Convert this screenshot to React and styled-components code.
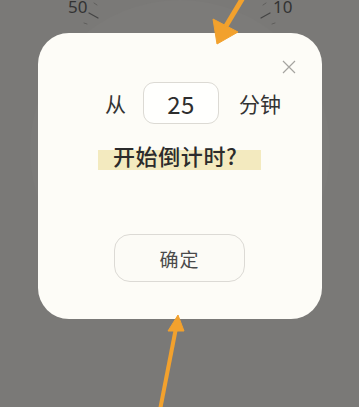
import React from 'react';
import styled, { createGlobalStyle } from 'styled-components';

const GlobalStyle = createGlobalStyle`
  html, body {
    margin: 0;
    padding: 0;
    background: #7a7977;
  }
  body {
    font-family: "Noto Sans CJK SC", "Noto Sans", sans-serif;
  }
`;

const Page = styled.div`
  position: relative;
  width: 359px;
  height: 407px;
  overflow: hidden;
  box-sizing: border-box;
  padding: 33px 0 0 38px;
  background: #7a7977;
`;

// dial behind the dialog
const Dial = styled.svg`
  position: absolute;
  top: 0;
  left: 0;
  width: 359px;
  height: 407px;
`;

const Arrows = styled.svg`
  position: absolute;
  top: 0;
  left: 0;
  width: 359px;
  height: 407px;
  pointer-events: none;
  z-index: 3;
`;

const Card = styled.div`
  position: relative;
  z-index: 1;
  width: 284px;
  height: 286px;
  box-sizing: border-box;
  background: #fdfcf7;
  border-radius: 31px;
  padding-top: 49px;
  display: flex;
  flex-direction: column;
  align-items: flex-start;
`;

const Close = styled.button`
  position: absolute;
  top: 27px;
  right: 26px;
  width: 14px;
  height: 14px;
  padding: 0;
  border: none;
  background: none;
  display: flex;
`;

const Row = styled.div`
  display: flex;
  align-items: center;
  margin-left: 67px;
  height: 42px;
  color: #333;
  font-size: 21px;
`;

const Word = styled.span`
  line-height: 1;
`;

const Minutes = styled.div`
  width: 76px;
  height: 42px;
  box-sizing: border-box;
  margin: 0 20px 0 17px;
  border: 1px solid #dcdad4;
  border-radius: 11px;
  background: #fffffd;
  display: flex;
  align-items: center;
  justify-content: center;
  font-size: 24px;
  color: #2e2e2e;
  letter-spacing: 0.5px;
`;

const Title = styled.span`
  margin: 19px 0 0 60px;
  width: 163px;
  height: 27px;
  box-sizing: border-box;
  padding-left: 15px;
  font-size: 22px;
  font-weight: 500;
  line-height: 24px;
  color: #2b2b2b;
  letter-spacing: 0.6px;
  white-space: nowrap;
  background: linear-gradient(transparent 7px, #f3eabf 7px);
`;

const Confirm = styled.button`
  margin: 64px 0 0 76px;
  width: 131px;
  height: 48px;
  border: 1px solid #dcdad5;
  border-radius: 16px;
  background: #fcfbf6;
  font-family: inherit;
  font-size: 19px;
  color: #4a4a4a;
  letter-spacing: 1px;
  padding: 0;
`;

export default function App() {
  return (
    <>
      <GlobalStyle />
      <Page>
        <Dial viewBox="0 0 359 407">
          <circle cx="180" cy="150" r="150" fill="#7c7b79" />
          <g fontFamily="Noto Sans, sans-serif" fontSize="17" fill="#333">
            <text x="68" y="13">50</text>
            <text x="273" y="13">10</text>
          </g>
          <g stroke="#444" strokeWidth="1.2" strokeLinecap="round">
            <line x1="89" y1="13" x2="98" y2="18" />
            <line x1="261" y1="18" x2="270" y2="13" />
          </g>
          <g stroke="#5f5e5c" strokeWidth="1" strokeLinecap="round">
            <line x1="94" y1="3" x2="97" y2="5" />
            <line x1="84" y1="23" x2="87" y2="24" />
            <line x1="263" y1="5" x2="266" y2="3" />
            <line x1="272" y1="24" x2="275" y2="23" />
          </g>
        </Dial>

        <Card>
          <Close aria-label="close">
            <svg width="14" height="14" viewBox="0 0 14 14">
              <path d="M1 1 L13 13 M13 1 L1 13" stroke="#a5a4a0" strokeWidth="1.2" />
            </svg>
          </Close>
          <Row>
            <Word>从</Word>
            <Minutes>25</Minutes>
            <Word>分钟</Word>
          </Row>
          <Title>开始倒计时?</Title>
          <Confirm>确定</Confirm>
        </Card>

        <Arrows viewBox="0 0 359 407">
          <g fill="#f2a12d" stroke="#f2a12d" strokeLinejoin="round">
            <line x1="244" y1="-4" x2="226" y2="26" strokeWidth="5" />
            <polygon points="217,44 213,19 238,32" strokeWidth="1" />
            <line x1="160" y1="410" x2="176" y2="328" strokeWidth="4" />
            <polygon points="178,315 168,331 184,331" strokeWidth="1" />
          </g>
        </Arrows>
      </Page>
    </>
  );
}
